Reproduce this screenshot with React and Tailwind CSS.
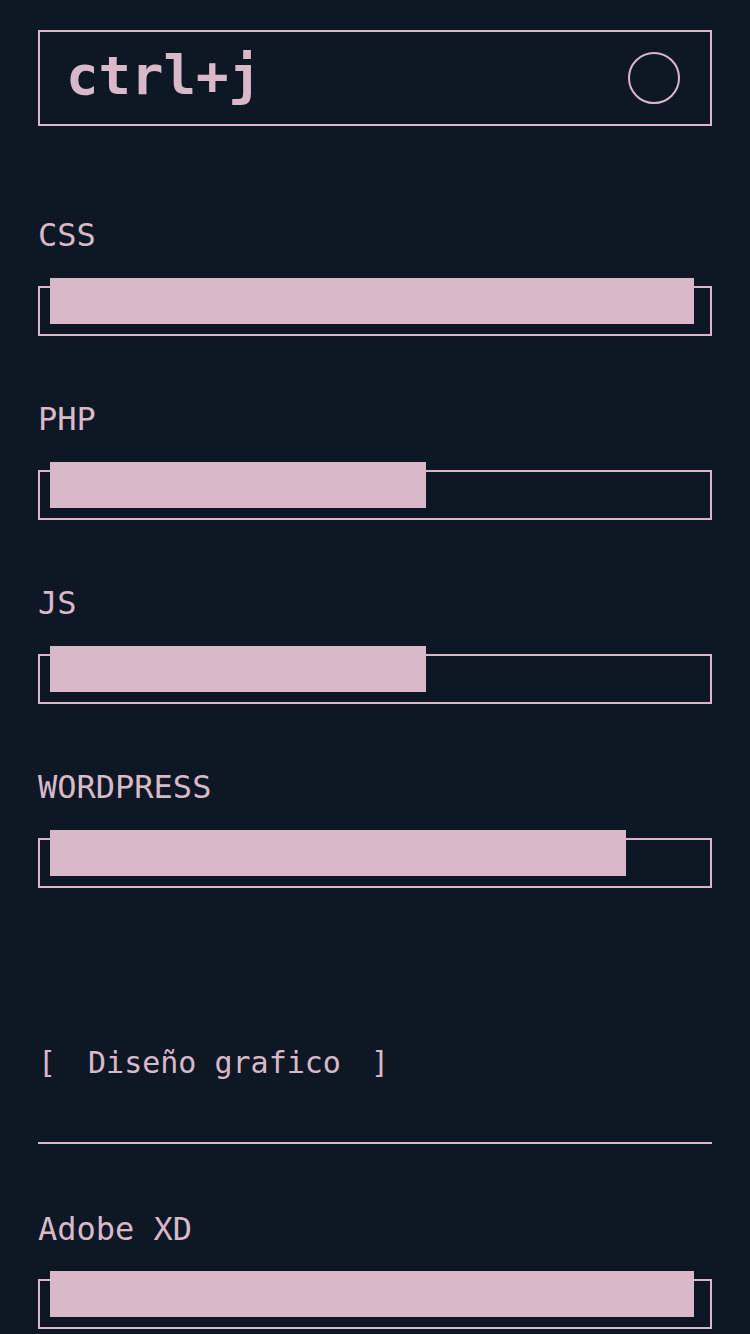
import React from 'react';

const skills = [
  { name: 'CSS', width: 644 },
  { name: 'PHP', width: 376 },
  { name: 'JS', width: 376 },
  { name: 'WORDPRESS', width: 576 },
];

const SkillBar = ({ name, width, first }) => (
  <div className={first ? 'mt-[93px]' : 'mt-[67px]'}>
    <p className="text-[32px] leading-none text-[#d9b9c9]">{name}</p>
    <div className="mt-[35px] h-[50px] border-2 border-[#d9b9c9]">
      <div
        className="-mt-[10px] ml-[10px] h-[46px] bg-[#d9b9c9]"
        style={{ width }}
      />
    </div>
  </div>
);

export default function App() {
  return (
    <div
      className="min-h-screen w-[750px] bg-[#0e1824] px-[38px] pb-[6px] text-[#d9b9c9]"
      style={{ fontFamily: '"DejaVu Sans Mono", "Liberation Mono", monospace' }}
    >
      <header className="flex h-[96px] translate-y-[30px] items-center justify-between border-2 border-[#d9b9c9] pl-[26px] pr-[30px]">
        <h1 className="-mt-[4px] text-[54px] font-bold leading-none">ctrl+j</h1>
        <button className="h-[52px] w-[52px] rounded-full border-2 border-[#d9b9c9]" />
      </header>
      <div className="h-[30px]" />

      {skills.map((s, i) => (
        <SkillBar key={s.name} {...s} first={i === 0} />
      ))}

      <div className="mt-[160px] flex text-[30px] leading-none">
        <span>[</span>
        <span className="ml-[32px]">Diseño grafico</span>
        <span className="ml-[30px]">]</span>
      </div>
      <div className="mt-[64px] h-[2px] bg-[#d9b9c9]" />

      <div className="mt-[69px]">
        <p className="text-[32px] leading-none">Adobe XD</p>
        <div className="mt-[34px] h-[50px] border-2 border-[#d9b9c9]">
          <div className="-mt-[10px] ml-[10px] h-[46px] w-[644px] bg-[#d9b9c9]" />
        </div>
      </div>
    </div>
  );
}
